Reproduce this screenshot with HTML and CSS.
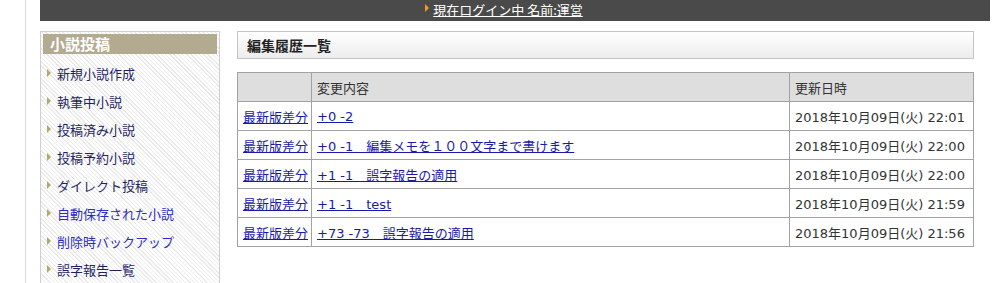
FILE: index.html
```html
<!DOCTYPE html>
<html lang="ja">
<head>
    <meta charset="UTF-8">
    <meta name="viewport" content="width=device-width, initial-scale=1.0">
    <title>編集履歴一覧</title>
    <link rel="stylesheet" href="styles.css">
</head>
<body>
    <div class="page">
        <div class="header">
            <a href="#" class="login">現在ログイン中 名前:運営</a>
        </div>
        <div class="content">
            <div class="side">
                <div class="side-title">小説投稿</div>
                <ul class="menu">
                    <li><a href="#">新規小説作成</a></li>
                    <li><a href="#">執筆中小説</a></li>
                    <li><a href="#">投稿済み小説</a></li>
                    <li><a href="#">投稿予約小説</a></li>
                    <li><a href="#">ダイレクト投稿</a></li>
                    <li><a href="#" class="blue">自動保存された小説</a></li>
                    <li><a href="#" class="blue">削除時バックアップ</a></li>
                    <li><a href="#">誤字報告一覧</a></li>
                </ul>
            </div>
            <div class="main">
                <h2 class="main-title">編集履歴一覧</h2>
                <table class="history">
                    <tr>
                        <th class="col-diff"></th>
                        <th class="col-body">変更内容</th>
                        <th class="col-date">更新日時</th>
                    </tr>
                    <tr>
                        <td class="col-diff"><a href="#">最新版差分</a></td>
                        <td><a href="#">+0 -2</a></td>
                        <td>2018年10月09日(火) 22:01</td>
                    </tr>
                    <tr>
                        <td class="col-diff"><a href="#">最新版差分</a></td>
                        <td><a href="#">+0 -1　編集メモを１００文字まで書けます</a></td>
                        <td>2018年10月09日(火) 22:00</td>
                    </tr>
                    <tr>
                        <td class="col-diff"><a href="#">最新版差分</a></td>
                        <td><a href="#">+1 -1　誤字報告の適用</a></td>
                        <td>2018年10月09日(火) 22:00</td>
                    </tr>
                    <tr>
                        <td class="col-diff"><a href="#">最新版差分</a></td>
                        <td><a href="#">+1 -1　test</a></td>
                        <td>2018年10月09日(火) 21:59</td>
                    </tr>
                    <tr>
                        <td class="col-diff"><a href="#">最新版差分</a></td>
                        <td><a href="#">+73 -73　誤字報告の適用</a></td>
                        <td>2018年10月09日(火) 21:56</td>
                    </tr>
                </table>
            </div>
        </div>
    </div>
</body>
</html>
```

FILE: styles.css
```css
body {
    margin: 0;
    padding: 0;
    background: #fff;
    font-family: "Noto Sans CJK JP", "Noto Sans", sans-serif;
    font-size: 13px;
    color: #333;
    overflow: hidden;
}

.page {
    margin-left: 25px;
    border-left: 1px solid #dcdcdc;
    padding-left: 14px;
    min-height: 283px;
}

.header {
    width: 928px;
    height: 21px;
    padding-right: 22px;
    background-color: #4a4a4a;
    text-align: center;
    line-height: 19px;
}

.login {
    color: #fff;
    font-size: 13px;
    padding-left: 8px;
    position: relative;
}

.login::before {
    content: "";
    position: absolute;
    left: 0;
    top: 4px;
    border-left: 4px solid #f29a1e;
    border-top: 4px solid transparent;
    border-bottom: 4px solid transparent;
}

.content {
    display: flex;
    margin-top: 10px;
}

.side {
    width: 174px;
    height: 260px;
    border: 1px solid #cfcfcf;
    padding: 2px 2px 0 2px;
    background: repeating-linear-gradient(45deg, #fff 0, #fff 2px, #eaeaea 2px, #eaeaea 3px);
}

.side-title {
    background-color: #b3ab90;
    color: #fff;
    font-weight: bold;
    font-size: 15px;
    height: 20px;
    line-height: 19px;
    padding-left: 7px;
}

.menu {
    list-style: none;
    margin: 0;
    padding: 0;
}

.menu li {
    height: 28px;
    line-height: 28px;
    padding-left: 14px;
    position: relative;
}

.menu li:first-child {
    margin-top: 6px;
}

.menu li::before {
    content: "";
    position: absolute;
    left: 4px;
    top: 9px;
    border-left: 4px solid #b5a66a;
    border-top: 4px solid transparent;
    border-bottom: 4px solid transparent;
}

.menu a {
    color: #1f1f63;
    text-decoration: none;
}

.menu a.blue {
    color: #2b2bc8;
}

.main {
    margin-left: 17px;
    width: 737px;
}

.main-title {
    margin: 0;
    height: 26px;
    border: 1px solid #c4c4c4;
    background: linear-gradient(#fff, #ececec);
    font-size: 14px;
    font-weight: bold;
    color: #222;
    line-height: 26px;
    padding-left: 9px;
}

.history {
    margin-top: 13px;
    width: 737px;
    border-collapse: collapse;
    border: 1px solid #9d9d9d;
    font-family: "DejaVu Sans", "Noto Sans CJK JP", sans-serif;
    font-size: 13px;
}

.history th,
.history td {
    border: 1px solid #a2a2a2;
    height: 28px;
    padding: 0 5px;
    text-align: left;
    font-weight: normal;
    white-space: nowrap;
}

.history th {
    background-color: #dedede;
    color: #333;
}

.history .col-diff {
    width: 65px;
    padding-right: 3px;
}

.col-date {
    width: 173px;
}

.history a {
    color: #1a1aa8;
}
```
